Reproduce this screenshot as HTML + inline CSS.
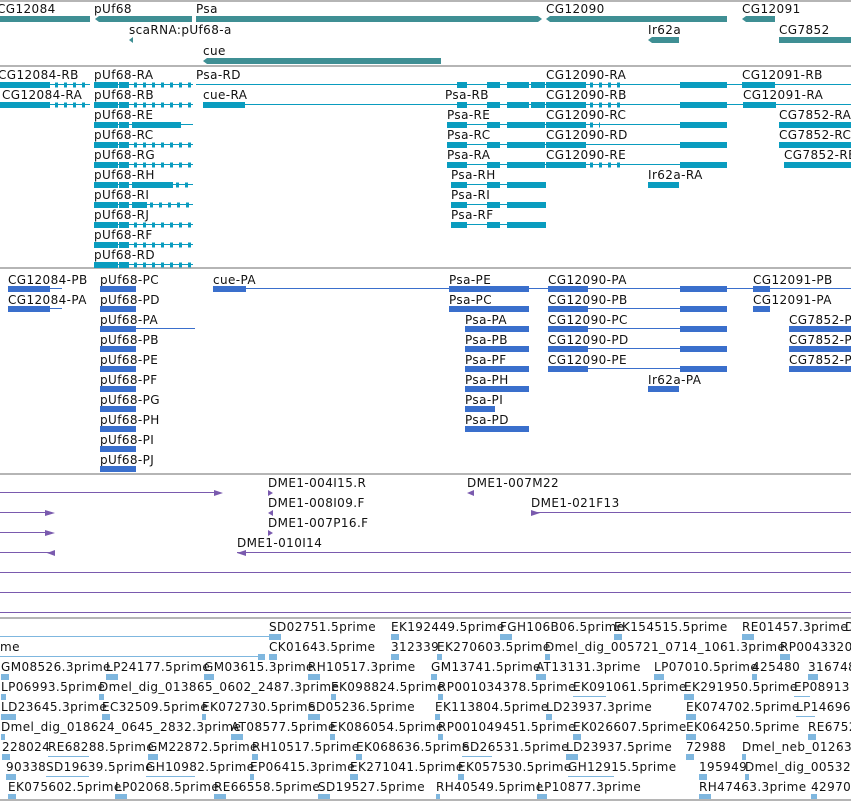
<!DOCTYPE html>
<html><head><meta charset="utf-8"><style>
html,body{margin:0;padding:0;background:#fff;width:851px;height:802px;overflow:hidden}
svg{display:block}
text{font-family:"DejaVu Sans","Liberation Sans",sans-serif;font-size:12px;fill:#111;letter-spacing:0.4px}
line{shape-rendering:crispEdges}
.g{fill:#3f8f94}
.t{fill:#0a9cbf}.tl{stroke:#0a9cbf;stroke-width:1}
.p{fill:#3a6fcc}.pl{stroke:#3a6fcc;stroke-width:1}
.v{fill:#7a5aae}.vl{stroke:#7a5aae;stroke-width:1}
.e{fill:#7fb7df}.el{stroke:#7fb7df;stroke-width:1}
.sep{stroke:#b5b5b5;stroke-width:2}
.ar{stroke-width:5;stroke-dasharray:3 6;fill:none}
</style></head><body>
<svg width="851" height="802" xmlns="http://www.w3.org/2000/svg">
<line class="sep" x1="0" y1="1" x2="851" y2="1"/>
<line class="sep" x1="0" y1="66" x2="851" y2="66"/>
<line class="sep" x1="0" y1="268" x2="851" y2="268"/>
<line class="sep" x1="0" y1="474" x2="851" y2="474"/>
<line class="sep" x1="0" y1="618" x2="851" y2="618"/>
<line class="sep" x1="0" y1="800" x2="851" y2="800"/>

<text x="-3" y="13">CG12084</text><text x="94" y="13">pUf68</text><text x="196" y="13">Psa</text>
<text x="546" y="13">CG12090</text><text x="742" y="13">CG12091</text>
<rect class="g" x="0" y="16" width="90" height="6"/>
<polygon class="g" points="95,19 99,16 192,16 192,22 99,22"/>
<polygon class="g" points="196,16 538,16 542,19 538,22 196,22"/>
<polygon class="g" points="546,19 550,16 727,16 727,22 550,22"/>
<polygon class="g" points="742,19 746,16 775,16 775,22 746,22"/>
<text x="129" y="34">scaRNA:pUf68-a</text>
<polygon class="g" points="129,40 133,37 133,43"/>
<text x="648" y="34">Ir62a</text><polygon class="g" points="648,40 652,37 679,37 679,43 652,43"/>
<text x="779" y="34">CG7852</text><rect class="g" x="779" y="37" width="72" height="6"/>
<text x="203" y="55">cue</text><polygon class="g" points="203,61 207,58 441,58 441,64 207,64"/>

<g>
<text x="-2" y="79">CG12084-RB</text><text x="94" y="79">pUf68-RA</text><text x="196" y="79">Psa-RD</text><text x="546" y="79">CG12090-RA</text><text x="742" y="79">CG12091-RB</text>
<text x="2" y="99">CG12084-RA</text><text x="94" y="99">pUf68-RB</text><text x="203" y="99">cue-RA</text><text x="445" y="99">Psa-RB</text><text x="546" y="99">CG12090-RB</text><text x="743" y="99">CG12091-RA</text>
<text x="94" y="119">pUf68-RE</text><text x="447" y="119">Psa-RE</text><text x="546" y="119">CG12090-RC</text><text x="779" y="119">CG7852-RA</text>
<text x="94" y="139">pUf68-RC</text><text x="447" y="139">Psa-RC</text><text x="546" y="139">CG12090-RD</text><text x="779" y="139">CG7852-RC</text>
<text x="94" y="159">pUf68-RG</text><text x="447" y="159">Psa-RA</text><text x="546" y="159">CG12090-RE</text><text x="784" y="159">CG7852-RE</text>
<text x="94" y="179">pUf68-RH</text><text x="451" y="179">Psa-RH</text><text x="648" y="179">Ir62a-RA</text>
<text x="94" y="199">pUf68-RI</text><text x="451" y="199">Psa-RI</text>
<text x="94" y="219">pUf68-RJ</text><text x="451" y="219">Psa-RF</text>
<text x="94" y="239">pUf68-RF</text>
<text x="94" y="259">pUf68-RD</text>
</g>
<g class="tl" transform="translate(0,-0.5)">
<line x1="0" y1="85" x2="90" y2="85"/><line x1="94" y1="85" x2="193" y2="85"/><line x1="196" y1="85" x2="851" y2="85"/>
<line x1="2" y1="105" x2="90" y2="105"/><line x1="94" y1="105" x2="193" y2="105"/><line x1="203" y1="105" x2="851" y2="105"/>
<line x1="94" y1="125" x2="193" y2="125"/><line x1="447" y1="125" x2="727" y2="125"/><line x1="779" y1="125" x2="851" y2="125"/>
<line x1="94" y1="145" x2="193" y2="145"/><line x1="447" y1="145" x2="727" y2="145"/><line x1="779" y1="145" x2="851" y2="145"/>
<line x1="94" y1="165" x2="193" y2="165"/><line x1="447" y1="165" x2="727" y2="165"/><line x1="784" y1="165" x2="851" y2="165"/>
<line x1="94" y1="185" x2="193" y2="185"/><line x1="451" y1="185" x2="546" y2="185"/>
<line x1="94" y1="205" x2="193" y2="205"/><line x1="451" y1="205" x2="546" y2="205"/>
<line x1="94" y1="225" x2="193" y2="225"/><line x1="451" y1="225" x2="546" y2="225"/>
<line x1="94" y1="245" x2="193" y2="245"/>
<line x1="94" y1="265" x2="193" y2="265"/>
</g>
<g class="tl ar">
<line x1="134" y1="85" x2="193" y2="85"/><line x1="134" y1="105" x2="193" y2="105"/><line x1="134" y1="145" x2="193" y2="145"/><line x1="134" y1="165" x2="193" y2="165"/><line x1="176" y1="185" x2="193" y2="185"/><line x1="150" y1="205" x2="193" y2="205"/><line x1="134" y1="225" x2="193" y2="225"/><line x1="134" y1="245" x2="193" y2="245"/><line x1="134" y1="265" x2="193" y2="265"/>
<line x1="590" y1="85" x2="620" y2="85"/><line x1="590" y1="105" x2="620" y2="105"/><line x1="590" y1="125" x2="600" y2="125"/><line x1="590" y1="165" x2="620" y2="165"/>
<line x1="55" y1="85" x2="90" y2="85"/><line x1="55" y1="105" x2="90" y2="105"/>
</g>
<g class="t">
<rect x="0" y="82" width="50" height="6"/><rect x="0" y="102" width="50" height="6"/>
<rect x="94" y="82" width="24" height="6"/><rect x="119" y="82" width="10" height="6"/><rect x="94" y="102" width="24" height="6"/><rect x="119" y="102" width="10" height="6"/>
<rect x="94" y="122" width="24" height="6"/><rect x="119" y="122" width="10" height="6"/><rect x="132" y="122" width="49" height="6"/>
<rect x="94" y="142" width="24" height="6"/><rect x="119" y="142" width="10" height="6"/>
<rect x="94" y="162" width="24" height="6"/><rect x="119" y="162" width="10" height="6"/>
<rect x="94" y="182" width="24" height="6"/><rect x="119" y="182" width="10" height="6"/><rect x="132" y="182" width="41" height="6"/>
<rect x="94" y="202" width="24" height="6"/><rect x="119" y="202" width="10" height="6"/><rect x="132" y="202" width="15" height="6"/>
<rect x="94" y="222" width="24" height="6"/><rect x="119" y="222" width="10" height="6"/>
<rect x="94" y="242" width="24" height="6"/><rect x="119" y="242" width="10" height="6"/>
<rect x="94" y="262" width="24" height="6"/><rect x="119" y="262" width="10" height="6"/>
<rect x="203" y="102" width="42" height="6"/>
<rect x="457" y="82" width="10" height="6"/><rect x="487" y="82" width="13" height="6"/><rect x="507" y="82" width="22" height="6"/><rect x="531" y="82" width="14" height="6"/>
<rect x="457" y="102" width="10" height="6"/><rect x="487" y="102" width="13" height="6"/><rect x="507" y="102" width="22" height="6"/><rect x="531" y="102" width="14" height="6"/>
<rect x="447" y="122" width="20" height="6"/><rect x="487" y="122" width="13" height="6"/><rect x="507" y="122" width="38" height="6"/>
<rect x="447" y="142" width="20" height="6"/><rect x="487" y="142" width="13" height="6"/><rect x="507" y="142" width="38" height="6"/>
<rect x="447" y="162" width="20" height="6"/><rect x="487" y="162" width="13" height="6"/><rect x="507" y="162" width="38" height="6"/>
<rect x="451" y="182" width="16" height="6"/><rect x="487" y="182" width="13" height="6"/><rect x="507" y="182" width="39" height="6"/>
<rect x="451" y="202" width="16" height="6"/><rect x="487" y="202" width="13" height="6"/><rect x="507" y="202" width="39" height="6"/>
<rect x="451" y="222" width="16" height="6"/><rect x="487" y="222" width="13" height="6"/><rect x="507" y="222" width="39" height="6"/>
<rect x="546" y="82" width="40" height="6"/><rect x="546" y="102" width="40" height="6"/><rect x="546" y="122" width="40" height="6"/><rect x="546" y="142" width="40" height="6"/><rect x="546" y="162" width="40" height="6"/>
<rect x="680" y="82" width="47" height="6"/><rect x="680" y="102" width="47" height="6"/><rect x="680" y="122" width="47" height="6"/><rect x="680" y="142" width="47" height="6"/><rect x="680" y="162" width="47" height="6"/>
<rect x="742" y="82" width="33" height="6"/><rect x="743" y="102" width="33" height="6"/>
<rect x="779" y="122" width="72" height="6"/><rect x="779" y="142" width="72" height="6"/><rect x="784" y="162" width="67" height="6"/>
<rect x="648" y="182" width="31" height="6"/>
</g>

<g>
<text x="8" y="284">CG12084-PB</text><text x="100" y="284">pUf68-PC</text><text x="213" y="284">cue-PA</text><text x="449" y="284">Psa-PE</text><text x="548" y="284">CG12090-PA</text><text x="753" y="284">CG12091-PB</text>
<text x="8" y="304">CG12084-PA</text><text x="100" y="304">pUf68-PD</text><text x="449" y="304">Psa-PC</text><text x="548" y="304">CG12090-PB</text><text x="753" y="304">CG12091-PA</text>
<text x="100" y="324">pUf68-PA</text><text x="465" y="324">Psa-PA</text><text x="548" y="324">CG12090-PC</text><text x="789" y="324">CG7852-PA</text>
<text x="100" y="344">pUf68-PB</text><text x="465" y="344">Psa-PB</text><text x="548" y="344">CG12090-PD</text><text x="789" y="344">CG7852-PC</text>
<text x="100" y="364">pUf68-PE</text><text x="465" y="364">Psa-PF</text><text x="548" y="364">CG12090-PE</text><text x="789" y="364">CG7852-PE</text>
<text x="100" y="384">pUf68-PF</text><text x="465" y="384">Psa-PH</text><text x="648" y="384">Ir62a-PA</text>
<text x="100" y="404">pUf68-PG</text><text x="465" y="404">Psa-PI</text>
<text x="100" y="424">pUf68-PH</text><text x="465" y="424">Psa-PD</text>
<text x="100" y="444">pUf68-PI</text>
<text x="100" y="464">pUf68-PJ</text>
</g>
<g class="pl" transform="translate(0,-0.5)">
<line x1="8" y1="289" x2="62" y2="289"/><line x1="8" y1="309" x2="62" y2="309"/>
<line x1="213" y1="289" x2="851" y2="289"/><line x1="100" y1="329" x2="195" y2="329"/>
<line x1="548" y1="289" x2="727" y2="289"/><line x1="548" y1="309" x2="727" y2="309"/><line x1="548" y1="329" x2="727" y2="329"/><line x1="548" y1="349" x2="727" y2="349"/><line x1="548" y1="369" x2="727" y2="369"/>
<line x1="789" y1="329" x2="851" y2="329"/><line x1="789" y1="349" x2="851" y2="349"/><line x1="789" y1="369" x2="851" y2="369"/>
</g>
<g class="p">
<rect x="8" y="286" width="42" height="6"/><rect x="8" y="306" width="42" height="6"/>
<rect x="100" y="286" width="36" height="6"/><rect x="100" y="306" width="36" height="6"/><rect x="100" y="326" width="36" height="6"/><rect x="100" y="346" width="36" height="6"/><rect x="100" y="366" width="36" height="6"/><rect x="100" y="386" width="36" height="6"/><rect x="100" y="406" width="36" height="6"/><rect x="100" y="426" width="36" height="6"/><rect x="100" y="446" width="36" height="6"/><rect x="100" y="466" width="36" height="6"/>
<rect x="213" y="286" width="33" height="6"/>
<rect x="449" y="286" width="80" height="6"/><rect x="449" y="306" width="80" height="6"/>
<rect x="465" y="326" width="64" height="6"/><rect x="465" y="346" width="64" height="6"/><rect x="465" y="366" width="64" height="6"/><rect x="465" y="386" width="64" height="6"/><rect x="465" y="406" width="30" height="6"/><rect x="465" y="426" width="64" height="6"/>
<rect x="548" y="286" width="40" height="6"/><rect x="548" y="306" width="40" height="6"/><rect x="548" y="326" width="40" height="6"/><rect x="548" y="346" width="40" height="6"/><rect x="548" y="366" width="40" height="6"/>
<rect x="680" y="286" width="47" height="6"/><rect x="680" y="306" width="47" height="6"/><rect x="680" y="326" width="47" height="6"/><rect x="680" y="346" width="47" height="6"/><rect x="680" y="366" width="47" height="6"/>
<rect x="753" y="286" width="17" height="6"/><rect x="753" y="306" width="17" height="6"/>
<rect x="789" y="326" width="62" height="6"/><rect x="789" y="346" width="62" height="6"/><rect x="789" y="366" width="62" height="6"/>
<rect x="648" y="386" width="31" height="6"/>
</g>

<text x="268" y="487">DME1-004I15.R</text><text x="268" y="507">DME1-008I09.F</text><text x="268" y="527">DME1-007P16.F</text><text x="237" y="547">DME1-010I14</text>
<text x="467" y="487">DME1-007M22</text><text x="531" y="507">DME1-021F13</text>
<g class="vl" transform="translate(0,-0.5)">
<line x1="0" y1="493" x2="218" y2="493"/><line x1="0" y1="513" x2="52" y2="513"/><line x1="0" y1="533" x2="52" y2="533"/><line x1="0" y1="553" x2="52" y2="553"/>
<line x1="237" y1="553" x2="851" y2="553"/><line x1="531" y1="513" x2="851" y2="513"/>
<line x1="0" y1="573" x2="851" y2="573"/><line x1="0" y1="593" x2="851" y2="593"/><line x1="0" y1="613" x2="851" y2="613"/>
</g>
<g class="v">
<polygon points="214,490 223,493 214,496"/><polygon points="45,510 55,513 45,516"/><polygon points="45,530 55,533 45,536"/><polygon points="47,553 55,550 55,556"/>
<polygon points="237,553 246,550 246,556"/><polygon points="268,490 273,493 268,496"/><polygon points="268,513 273,510 273,516"/><polygon points="268,530 273,533 268,536"/>
<polygon points="467,493 474,490 474,496"/><polygon points="531,510 540,513 531,516"/>
</g>

<g>
<text x="269" y="631">SD02751.5prime</text><text x="391" y="631">EK192449.5prime</text><text x="500" y="631">FGH106B06.5prime</text><text x="614" y="631">EK154515.5prime</text><text x="742" y="631">RE01457.3prime</text><text x="845" y="631">D</text>
<text x="0" y="651">me</text><text x="269" y="651">CK01643.5prime</text><text x="391" y="651">312339</text><text x="437" y="651">EK270603.5prime</text><text x="545" y="651">Dmel_dig_005721_0714_1061.3prime</text><text x="780" y="651">RP0043320</text>
<text x="1" y="671">GM08526.3prime</text><text x="106" y="671">LP24177.5prime</text><text x="204" y="671">GM03615.3prime</text><text x="308" y="671">RH10517.3prime</text><text x="431" y="671">GM13741.5prime</text><text x="536" y="671">AT13131.3prime</text><text x="654" y="671">LP07010.5prime</text><text x="752" y="671">425480</text><text x="808" y="671">316748</text>
<text x="1" y="691">LP06993.5prime</text><text x="99" y="691">Dmel_dig_013865_0602_2487.3prime</text><text x="331" y="691">EK098824.5prime</text><text x="438" y="691">RP001034378.5prime</text><text x="573" y="691">EK091061.5prime</text><text x="684" y="691">EK291950.5prime</text><text x="794" y="691">EP08913.3</text>
<text x="1" y="711">LD23645.3prime</text><text x="102" y="711">EC32509.5prime</text><text x="202" y="711">EK072730.5prime</text><text x="308" y="711">SD05236.5prime</text><text x="435" y="711">EK113804.5prime</text><text x="546" y="711">LD23937.3prime</text><text x="686" y="711">EK074702.5prime</text><text x="796" y="711">LP14696.</text>
<text x="1" y="731">Dmel_dig_018624_0645_2832.3prime</text><text x="231" y="731">AT08577.5prime</text><text x="330" y="731">EK086054.5prime</text><text x="438" y="731">RP001049451.5prime</text><text x="573" y="731">EK026607.5prime</text><text x="686" y="731">EK064250.5prime</text><text x="808" y="731">RE6752</text>
<text x="2" y="751">228024</text><text x="48" y="751">RE68288.5prime</text><text x="148" y="751">GM22872.5prime</text><text x="252" y="751">RH10517.5prime</text><text x="356" y="751">EK068636.5prime</text><text x="462" y="751">SD26531.5prime</text><text x="566" y="751">LD23937.5prime</text><text x="686" y="751">72988</text><text x="742" y="751">Dmel_neb_012636</text>
<text x="6" y="771">90338</text><text x="46" y="771">SD19639.5prime</text><text x="146" y="771">GH10982.5prime</text><text x="250" y="771">EP06415.3prime</text><text x="350" y="771">EK271041.5prime</text><text x="458" y="771">EK057530.5prime</text><text x="568" y="771">GH12915.5prime</text><text x="699" y="771">195949</text><text x="745" y="771">Dmel_dig_005329</text>
<text x="8" y="791">EK075602.5prime</text><text x="115" y="791">LP02068.5prime</text><text x="214" y="791">RE66558.5prime</text><text x="318" y="791">SD19527.5prime</text><text x="436" y="791">RH40549.5prime</text><text x="537" y="791">LP10877.3prime</text><text x="699" y="791">RH47463.3prime</text><text x="811" y="791">42970</text>
</g>
<g class="el" transform="translate(0,-0.5)">
<line x1="0" y1="637" x2="280" y2="637"/><line x1="0" y1="657" x2="263" y2="657"/>
<line x1="48" y1="757" x2="89" y2="757"/><line x1="46" y1="777" x2="89" y2="777"/><line x1="146" y1="777" x2="195" y2="777"/><line x1="462" y1="757" x2="492" y2="757"/><line x1="573" y1="697" x2="606" y2="697"/><line x1="568" y1="777" x2="614" y2="777"/><line x1="794" y1="697" x2="810" y2="697"/><line x1="796" y1="717" x2="815" y2="717"/>
</g>
<g class="e">
<rect x="269" y="634" width="12" height="6"/><rect x="391" y="634" width="8" height="6"/><rect x="500" y="634" width="12" height="6"/><rect x="614" y="634" width="8" height="6"/><rect x="742" y="634" width="12" height="6"/>
<rect x="258" y="654" width="7" height="6"/><rect x="269" y="654" width="8" height="6"/><rect x="391" y="654" width="8" height="6"/><rect x="437" y="654" width="5" height="6"/><rect x="545" y="654" width="5" height="6"/><rect x="780" y="654" width="10" height="6"/>
<rect x="1" y="674" width="8" height="6"/><rect x="106" y="674" width="12" height="6"/><rect x="204" y="674" width="10" height="6"/><rect x="308" y="674" width="12" height="6"/><rect x="431" y="674" width="6" height="6"/><rect x="536" y="674" width="10" height="6"/><rect x="654" y="674" width="10" height="6"/><rect x="752" y="674" width="5" height="6"/><rect x="808" y="674" width="10" height="6"/>
<rect x="1" y="694" width="5" height="6"/><rect x="99" y="694" width="5" height="6"/><rect x="331" y="694" width="5" height="6"/><rect x="438" y="694" width="5" height="6"/><rect x="684" y="694" width="10" height="6"/>
<rect x="1" y="714" width="15" height="6"/><rect x="102" y="714" width="8" height="6"/><rect x="202" y="714" width="4" height="6"/><rect x="308" y="714" width="12" height="6"/><rect x="435" y="714" width="5" height="6"/><rect x="546" y="714" width="6" height="6"/><rect x="686" y="714" width="10" height="6"/>
<rect x="1" y="734" width="4" height="6"/><rect x="231" y="734" width="12" height="6"/><rect x="330" y="734" width="5" height="6"/><rect x="438" y="734" width="5" height="6"/><rect x="573" y="734" width="8" height="6"/><rect x="686" y="734" width="10" height="6"/><rect x="808" y="734" width="8" height="6"/>
<rect x="2" y="754" width="8" height="6"/><rect x="148" y="754" width="10" height="6"/><rect x="252" y="754" width="6" height="6"/><rect x="356" y="754" width="6" height="6"/><rect x="566" y="754" width="12" height="6"/><rect x="686" y="754" width="8" height="6"/><rect x="742" y="754" width="4" height="6"/>
<rect x="6" y="774" width="10" height="6"/><rect x="250" y="774" width="4" height="6"/><rect x="350" y="774" width="8" height="6"/><rect x="458" y="774" width="6" height="6"/><rect x="699" y="774" width="8" height="6"/><rect x="745" y="774" width="4" height="6"/>
<rect x="8" y="794" width="8" height="5"/><rect x="115" y="794" width="12" height="5"/><rect x="214" y="794" width="12" height="5"/><rect x="318" y="794" width="12" height="5"/><rect x="436" y="794" width="4" height="5"/><rect x="537" y="794" width="10" height="5"/><rect x="699" y="794" width="12" height="5"/><rect x="811" y="794" width="6" height="5"/>
</g>
</svg>
</body></html>
